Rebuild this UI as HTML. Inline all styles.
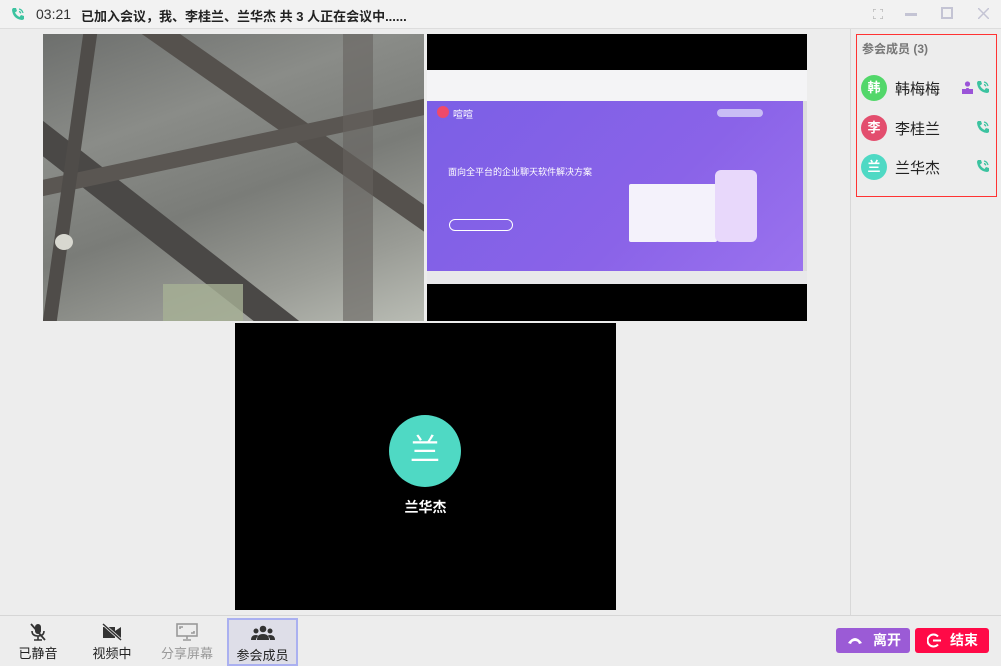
<!DOCTYPE html><html><head><meta charset="utf-8"><style>
*{margin:0;padding:0;box-sizing:border-box}
body{width:1001px;height:665px;background:#ededed;font-family:"Liberation Sans","Noto Sans CJK SC",sans-serif;position:relative;overflow:hidden}
.a{position:absolute}
.top{left:0;top:0;width:1001px;height:29px;background:#f2f2f2;border-bottom:1px solid #ddd}
.bot{left:0;top:615px;width:1001px;height:50px;border-top:1px solid #d6d6d6;background:#ededed}
.btn{position:absolute;top:2px;width:70px;height:46px;text-align:center;font-size:13px;color:#222}
.btn svg{display:block;margin:5px auto 2px}
.av{position:absolute;left:4px;width:26px;height:26px;border-radius:50%;color:#fff;font-size:13px;font-weight:bold;text-align:center;line-height:26px}
.nm{position:absolute;left:38px;font-size:15px;color:#222}
</style></head><body>
<div class="a top">
<svg class="a" style="left:11px;top:7px" width="14" height="14" viewBox="0 0 14 14"><path d="M2 1l3 0 1 3-2 1.5q1.5 3 4.5 4.5L10 8l3 1v3q-1 1-2 1Q2 12 1 3q0-1 1-2z" fill="#3cc3a0"/><path d="M8 2q3 .5 4 4M8 4.5q1.4.3 1.8 1.8" stroke="#3cc3a0" fill="none" stroke-width="1.3"/></svg>
<div class="a" style="left:36px;top:6px;font-size:14px;color:#333">03:21</div>
<div class="a" style="left:81px;top:6px;font-size:13px;font-weight:bold;color:#222">已加入会议，我、李桂兰、兰华杰 共 3 人正在会议中......</div>
<svg class="a" style="left:873px;top:9px" width="10" height="10"><path d="M0 3V0h3M7 0h3v3M10 7v3H7M3 10H0V7" stroke="#bbb" fill="none" stroke-width="1.5"/></svg>
<div class="a" style="left:905px;top:13px;width:12px;height:3px;background:#c4c4d4"></div>
<div class="a" style="left:941px;top:7px;width:12px;height:12px;border:2px solid #c4c4d4"></div>
<svg class="a" style="left:978px;top:8px" width="11" height="11"><path d="M0 0L11 11M11 0L0 11" stroke="#c4c4d4" stroke-width="1.5"/></svg>
</div>
<div class="a" style="left:850px;top:29px;width:1px;height:586px;background:#d8d8d8"></div>
<!-- cam tile -->
<div class="a" style="left:43px;top:34px;width:381px;height:287px;overflow:hidden;background:linear-gradient(160deg,#6d6f6d 0%,#8a8c88 30%,#7a7c78 55%,#9a9c96 80%,#b9bcb4 100%)">
<div class="a" style="left:-60px;top:40px;width:600px;height:28px;background:#4a4846;transform:rotate(38deg);transform-origin:0 0"></div>
<div class="a" style="left:80px;top:-40px;width:500px;height:22px;background:#55514d;transform:rotate(35deg);transform-origin:0 0"></div>
<div class="a" style="left:-20px;top:150px;width:450px;height:16px;background:#5a5652;transform:rotate(-12deg);transform-origin:0 0"></div>
<div class="a" style="left:20px;top:0;width:14px;height:287px;background:#4f4c49;transform:skewX(-8deg)"></div>
<div class="a" style="left:300px;top:0;width:30px;height:287px;background:#66635f;opacity:.6"></div>
<div class="a" style="left:12px;top:200px;width:18px;height:16px;border-radius:50%;background:#d8d8d0"></div>
<div class="a" style="left:120px;top:250px;width:80px;height:40px;background:#a6b095;opacity:.8"></div>
</div>
<!-- screen tile -->
<div class="a" style="left:427px;top:34px;width:380px;height:287px;background:#000;overflow:hidden">
<div class="a" style="left:0;top:36px;width:380px;height:31px;background:#f4f4f6"></div>
<div class="a" style="left:0;top:67px;width:376px;height:170px;background:linear-gradient(135deg,#7b5fe6,#8a63e8 60%,#9a72ee)"></div>
<div class="a" style="left:376px;top:67px;width:4px;height:170px;background:#ddd"></div>
<div class="a" style="left:10px;top:72px;width:12px;height:12px;border-radius:50%;background:#f04a6a"></div>
<div class="a" style="left:26px;top:72px;font-size:10px;color:#fff">喧喧</div>
<div class="a" style="left:290px;top:75px;width:46px;height:8px;border-radius:4px;background:#c9bdf5"></div>
<div class="a" style="left:21px;top:131px;font-size:9px;color:#fff">面向全平台的企业聊天软件解决方案</div>
<div class="a" style="left:22px;top:185px;width:64px;height:12px;border:1px solid #fff;border-radius:6px"></div>
<div class="a" style="left:202px;top:150px;width:88px;height:58px;background:#f4f2fb;border-radius:2px"></div>
<div class="a" style="left:288px;top:136px;width:42px;height:72px;background:#e8d8fb;border-radius:6px"></div>
<div class="a" style="left:0;top:237px;width:380px;height:13px;background:#e8e8ea"></div>
</div>
<!-- avatar tile -->
<div class="a" style="left:235px;top:323px;width:381px;height:287px;background:#000">
<div class="a" style="left:154px;top:92px;width:72px;height:72px;border-radius:50%;background:#4fd9c4;color:#fff;font-size:30px;text-align:center;line-height:72px">兰</div>
<div class="a" style="left:0;top:174px;width:381px;text-align:center;color:#fff;font-size:14px;font-weight:bold">兰华杰</div>
</div>
<!-- members -->
<div class="a" style="left:856px;top:34px;width:141px;height:163px;border:1px solid #f33">
<div class="a" style="left:5px;top:5px;font-size:12px;color:#777;font-weight:bold">参会成员 (3)</div>
<div class="a" style="left:0;top:40px;width:139px;height:26px"><div class="av" style="background:#52d76a">韩</div><div class="nm" style="top:3px">韩梅梅</div>
<svg class="a" style="left:104px;top:6px" width="13" height="13"><circle cx="6.5" cy="3" r="2.6" fill="#9b54d8"/><path d="M1 13V8h11v5z M5 7h3l-1 3h-1z" fill="#9b54d8"/></svg></div>
<div class="a" style="left:0;top:80px;width:139px;height:26px"><div class="av" style="background:#e34e6e">李</div><div class="nm" style="top:3px">李桂兰</div></div>
<div class="a" style="left:0;top:119px;width:139px;height:26px"><div class="av" style="background:#4fd9c4">兰</div><div class="nm" style="top:3px">兰华杰</div></div>
</div>
<svg class="a" style="left:976px;top:80px" width="14" height="14" viewBox="0 0 14 14"><path d="M2 1l3 0 1 3-2 1.5q1.5 3 4.5 4.5L10 8l3 1v3q-1 1-2 1Q2 12 1 3q0-1 1-2z" fill="#3cc3a0"/><path d="M8 2q3 .5 4 4M8 4.5q1.4.3 1.8 1.8" stroke="#3cc3a0" fill="none" stroke-width="1.3"/></svg>
<svg class="a" style="left:976px;top:120px" width="14" height="14" viewBox="0 0 14 14"><path d="M2 1l3 0 1 3-2 1.5q1.5 3 4.5 4.5L10 8l3 1v3q-1 1-2 1Q2 12 1 3q0-1 1-2z" fill="#3cc3a0"/><path d="M8 2q3 .5 4 4M8 4.5q1.4.3 1.8 1.8" stroke="#3cc3a0" fill="none" stroke-width="1.3"/></svg>
<svg class="a" style="left:976px;top:159px" width="14" height="14" viewBox="0 0 14 14"><path d="M2 1l3 0 1 3-2 1.5q1.5 3 4.5 4.5L10 8l3 1v3q-1 1-2 1Q2 12 1 3q0-1 1-2z" fill="#3cc3a0"/><path d="M8 2q3 .5 4 4M8 4.5q1.4.3 1.8 1.8" stroke="#3cc3a0" fill="none" stroke-width="1.3"/></svg>
<!-- bottom -->
<div class="a bot">
<div class="btn" style="left:3px"><svg width="18" height="18" viewBox="0 0 18 18"><rect x="6" y="1" width="6" height="10" rx="3" fill="#333"/><path d="M3 8q0 5 6 5t6-5M9 13v4M5 17h8" stroke="#333" fill="none" stroke-width="1.6"/><path d="M2 1L16 17" stroke="#333" stroke-width="1.8"/></svg>已静音</div>
<div class="btn" style="left:77px"><svg width="22" height="18" viewBox="0 0 22 18"><path d="M2 4h12v11H2zM14 8l6-4v11l-6-4z" fill="#333"/><path d="M2 1L20 17" stroke="#ededed" stroke-width="3"/><path d="M2 1L20 17" stroke="#333" stroke-width="1.5"/></svg>视频中</div>
<div class="btn" style="left:152px;color:#999"><svg width="22" height="18" viewBox="0 0 22 18"><rect x="1" y="1" width="20" height="12" fill="none" stroke="#999" stroke-width="1.6"/><path d="M11 13v3M7 17h8M4 6V4h3M18 8v2h-3" stroke="#999" fill="none" stroke-width="1.6"/></svg>分享屏幕</div>
<div class="btn" style="left:227px;top:2px;width:71px;height:48px;background:#dedee8;border:2px solid #aab0f0"><svg width="24" height="18" viewBox="0 0 24 18"><circle cx="12" cy="4" r="3.3" fill="#333"/><circle cx="5" cy="6" r="2.5" fill="#333"/><circle cx="19" cy="6" r="2.5" fill="#333"/><path d="M6 15q0-6 6-6t6 6zM0 15q0-5 5-5 2 0 2 1-2 2-2 4zM24 15q0-5-5-5-2 0-2 1 2 2 2 4z" fill="#333"/></svg>参会成员</div>
<div class="a" style="left:836px;top:12px;width:74px;height:25px;background:#9b5bd6;border-radius:3px;color:#fff;font-size:14px;font-weight:bold;line-height:25px;padding-left:37px">离开
<svg class="a" style="left:11px;top:8px" width="16" height="9"><path d="M1 7q7-10 14 0l-3 1-1-2q-3-2-6 0l-1 2z" fill="#fff"/></svg></div>
<div class="a" style="left:915px;top:12px;width:74px;height:25px;background:#ff0a47;border-radius:3px;color:#fff;font-size:14px;font-weight:bold;line-height:25px;padding-left:35px">结束
<svg class="a" style="left:12px;top:5px" width="15" height="15"><path d="M11 3.5A6 6 0 1 0 11 11.5" stroke="#fff" fill="none" stroke-width="2"/><path d="M6 7.5h8" stroke="#fff" stroke-width="2"/></svg></div>
</div>
</body></html>
